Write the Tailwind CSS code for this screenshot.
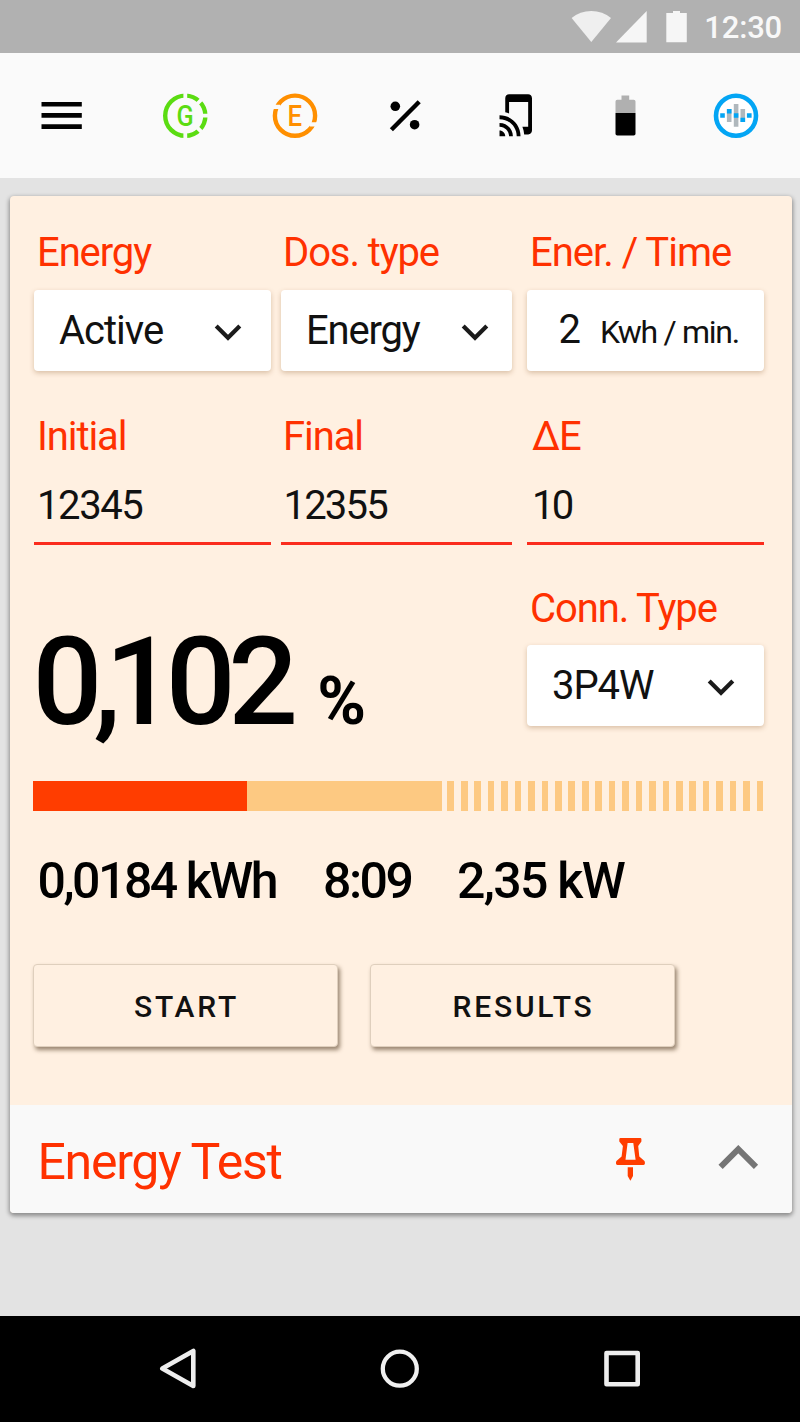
<!DOCTYPE html>
<html lang="en">
<head>
<meta charset="utf-8">
<meta name="viewport" content="width=device-width">
<title>Energy Test</title>
<script src="https://cdn.jsdelivr.net/npm/@tailwindcss/browser@4"></script>
</head>
<body class="flex h-[1422px] w-[800px] flex-col overflow-hidden bg-[#e3e3e3] font-['Roboto',sans-serif] text-[#111]">

<!-- Status bar -->
<header class="flex h-[53px] shrink-0 items-center justify-end bg-[#b1b1b1] pr-[18px] text-[#f8f8f8]">
  <svg class="h-[53px] w-[120px]" viewBox="570 0 120 53" fill="#f6f6f6">
    <path d="M591.3 42 571.6 18Q580 11 591.3 11T611 18Z" fill="#efefef"/>
    <path d="M616 42.6H646.7V11Z"/>
    <path d="M666.3 42.3V13H673V11H680V13H686.8V42.3Z"/>
  </svg>
  <span class="ml-[14px] pt-px text-[31px] leading-[53px] font-medium tracking-[-0.2px]">12:30</span>
</header>

<!-- Toolbar -->
<nav class="flex h-[125px] shrink-0 items-center bg-[#fafafa] pl-[38px]">
  <svg class="mr-[75px] size-12" viewBox="0 0 48 48"><path d="M3.5 10H43.8V14.6H3.5ZM3.5 21.1H43.8V25.7H3.5ZM3.5 32.3H43.8V36.9H3.5Z"/></svg>
  <div class="flex gap-[62.2px]">
    <svg class="size-12" viewBox="0 0 48 48" fill="none">
      <circle cx="24.3" cy="23.7" r="20.1" stroke="#5bdc12" stroke-width="4.4"/>
      <path d="M24.3 0V7M24.3 40.5V48M41 23.7H48M36 12 42 6M36 35.4 42 41.4" stroke="#fafafa" stroke-width="3.8"/>
      <text transform="translate(24 33.6) scale(.84 1)" text-anchor="middle" font-size="30" font-weight="500" fill="#5bdc12">G</text>
    </svg>
    <svg class="size-12" viewBox="0 0 48 48" fill="none">
      <circle cx="24" cy="23.7" r="20.1" stroke="#ff8f00" stroke-width="4.4"/>
      <path d="M1 14.8H9M39 32.4H47" stroke="#fafafa" stroke-width="4.2"/>
      <text transform="translate(23.8 33.6) scale(.86 1)" text-anchor="middle" font-size="30" font-weight="500" fill="#ff8f00">E</text>
    </svg>
    <svg class="size-12" viewBox="0 0 48 48">
      <circle cx="14.3" cy="14.3" r="4.8"/><circle cx="33.6" cy="32.7" r="4.8"/>
      <path d="M10.4 37.8 38.2 9.8" stroke="#000" stroke-width="4.4"/>
    </svg>
    <svg class="size-12" viewBox="0 0 48 48">
      <path transform="translate(3.7 .4) scale(1.91)" d="M2 16v2c2.76 0 5 2.24 5 5h2c0-3.87-3.13-7-7-7zm0 4v3h3c0-1.66-1.34-3-3-3zm0-8v2c4.97 0 9 4.03 9 9h2c0-6.08-4.92-11-11-11zM17 1.01L7 1c-1.1 0-2 .9-2 2v7.37c.69.16 1.36.37 2 .64V5h10v13h-3.03c.52 1.25.84 2.59.95 4H17c1.1 0 2-.9 2-2V3c0-1.1-.9-1.99-2-1.99z"/>
    </svg>
    <svg class="size-12" viewBox="0 0 48 48">
      <path fill="#b0b0b0" d="M13.5 21V9.5Q13.5 7.7 15.3 7.7H19.5V3.5H27.2V7.7H31.7Q33.5 7.7 33.5 9.5V21Z"/>
      <path d="M13.5 21H33.5V41.7Q33.5 43.5 31.7 43.5H15.3Q13.5 43.5 13.5 41.7Z"/>
    </svg>
    <svg class="size-12" viewBox="0 0 48 48">
      <circle cx="24" cy="23.7" r="20" fill="#fff" stroke="#03a5f4" stroke-width="4.6"/>
      <path fill="#b0b8bd" d="M14.9 17h4.6v13h-4.6zM21.8 12h4.6v22.7h-4.6zM28.5 17h4.6v13h-4.6z"/>
      <path fill="#03a5f4" d="M8.2 21.3h4.6v4.5H8.2zM14.9 17h4.6v4.4h-4.6zM21.8 21.3h4.6v4.5h-4.6zM28.5 25.7h4.6v4.4h-4.6zM34.9 21.3h4.7v4.5h-4.7z"/>
    </svg>
  </div>
</nav>

<!-- Energy test card -->
<main class="mt-[18px] ml-[9.5px] flex h-[1017px] w-[782.5px] shrink-0 flex-col rounded bg-[#fff0e1] shadow-[0_2px_4px_1px_rgba(0,0,0,0.38)]">
  <div class="flex h-[909px] shrink-0 flex-col pt-[37px] pl-[24px]">

    <div class="flex text-[40px] leading-[40px] tracking-[-1.1px] whitespace-nowrap">
      <div class="mr-[10px] w-[237px]">
        <div class="pl-[3.5px] text-[#ff3100]">Energy</div>
        <div class="mt-[17px] flex h-[81px] items-center rounded bg-white shadow-[0_2px_5px_rgba(130,80,30,0.3)]">
          <span class="w-[180px] pl-[25.5px] tracking-[-1px]">Active</span>
          <svg class="mt-[2px] h-[20px] w-[28px]" viewBox="0 0 28 20"><path d="M2.2 4 14 15.8 25.8 4" fill="none" stroke="#1b1b1b" stroke-width="4.2"/></svg>
        </div>
      </div>
      <div class="mr-[15px] w-[231px]">
        <div class="pl-[2.5px] text-[#ff3100]">Dos. type</div>
        <div class="mt-[17px] flex h-[81px] items-center rounded bg-white shadow-[0_2px_5px_rgba(130,80,30,0.3)]">
          <span class="w-[180px] pl-[25.5px] tracking-[-1.2px]">Energy</span>
          <svg class="mt-[2px] h-[20px] w-[28px]" viewBox="0 0 28 20"><path d="M2.2 4 14 15.8 25.8 4" fill="none" stroke="#1b1b1b" stroke-width="4.2"/></svg>
        </div>
      </div>
      <div class="w-[237px]">
        <div class="pl-[3.5px] tracking-[-1px] text-[#ff3100]">Ener. / Time</div>
        <div class="mt-[17px] flex h-[81px] items-baseline rounded bg-white pt-[20px] shadow-[0_2px_5px_rgba(130,80,30,0.3)]">
          <span class="w-[73.5px] pl-[32px]">2</span>
          <span class="text-[32px] tracking-[-1.3px]">Kwh / min.</span>
        </div>
      </div>
    </div>

    <div class="mt-[46px] flex text-[40px] leading-[40px] tracking-[-1.1px] whitespace-nowrap">
      <div class="mr-[10px] w-[237px] border-b-[3px] border-[#fb2c1d] pb-[16px]">
        <div class="pl-[3.5px] text-[#ff3100]">Initial</div>
        <div class="mt-[29px] pl-[3.5px] tracking-[-1.4px]">12345</div>
      </div>
      <div class="mr-[15px] w-[231px] border-b-[3px] border-[#fb2c1d] pb-[16px]">
        <div class="pl-[2.5px] text-[#ff3100]">Final</div>
        <div class="mt-[29px] pl-[3px] tracking-[-1.8px]">12355</div>
      </div>
      <div class="w-[237px] border-b-[3px] border-[#fb2c1d] pb-[16px]">
        <div class="pl-[5.5px] text-[#ff3100]">ΔE</div>
        <div class="mt-[29px] pl-[5.5px] tracking-[-2.8px]">10</div>
      </div>
    </div>

    <div class="mt-[44px] flex h-[137px] whitespace-nowrap">
      <div class="flex w-[493px] items-baseline pt-[32px] font-medium text-black">
        <span class="-ml-[1px] text-[123px] leading-[123px] tracking-[-9px]">0<span class="tracking-[-16px]">,</span>1<span class="tracking-[-7.5px]">0</span>2</span>
        <span class="ml-[28px] text-[66px] leading-[66px] font-bold">%</span>
      </div>
      <div class="w-[237px] text-[40px] leading-[40px] tracking-[-1.1px]">
        <div class="pl-[3.5px] text-[#ff3100]">Conn. Type</div>
        <div class="mt-[16px] flex h-[81px] items-center rounded bg-white shadow-[0_2px_5px_rgba(130,80,30,0.3)]">
          <span class="w-[180px] pl-[25.5px]">3P4W</span>
          <svg class="mt-[2px] h-[20px] w-[28px]" viewBox="0 0 28 20"><path d="M2.2 4 14 15.8 25.8 4" fill="none" stroke="#1b1b1b" stroke-width="4.2"/></svg>
        </div>
      </div>
    </div>

    <div class="mt-[55px] -ml-[0.3px] flex h-[30px] w-[730.8px]">
      <div class="w-[213.8px] bg-[#ff3d00]"></div>
      <div class="w-[195.3px] bg-[#fdc982]"></div>
      <div class="flex-1 bg-[repeating-linear-gradient(to_right,transparent_0px,transparent_5.5px,#fdc982_5.5px,#fdc982_12.1px,transparent_12.1px,transparent_13.44px)]"></div>
    </div>

    <div class="mt-[45px] flex text-[50px] leading-[50px] font-medium tracking-[-2.5px] whitespace-nowrap text-black">
      <span class="w-[287px] pl-[4px]">0,0184 kWh</span>
      <span class="w-[135px] pl-[2.5px]">8:09</span>
      <span class="pl-[1.5px] tracking-[-1.7px]">2,35 kW</span>
    </div>

    <div class="mt-[58px] -ml-[0.5px] flex gap-[32px] text-[30px] leading-[30px] font-medium tracking-[2.8px]">
      <button class="h-[83px] w-[305px] rounded border border-[#dfcfbd] bg-[#fff0e1] pt-[3px] pl-[2px] shadow-[2px_3px_4px_rgba(70,45,20,0.55)]">START</button>
      <button class="h-[83px] w-[305px] rounded border border-[#dfcfbd] bg-[#fff0e1] pt-[3px] pl-[2px] shadow-[2px_3px_4px_rgba(70,45,20,0.55)]">RESULTS</button>
    </div>
  </div>

  <div class="flex h-[108px] shrink-0 items-center rounded-b bg-[#f9f9f9] pl-[28px]">
    <h1 class="w-[576.5px] pt-[5px] text-[50px] leading-[50px] tracking-[-1.3px] text-[#ff3100]">Energy Test</h1>
    <svg class="h-[46px] w-[34px]" viewBox="0 0 34 46" fill="#ff3d00">
      <path fill-rule="evenodd" d="M6.5 2H26.2Q27.4 2 27.4 3.2V5.5L24.2 10 25.3 20.5 30.2 24.8Q30.9 25.5 30.9 26.6V27.6Q30.9 29 29.5 29H3.4Q2 29 2 27.6V26.6Q2 25.5 2.7 24.8L7.6 20.5 8.9 10 5.3 5.5V3.2Q5.3 2 6.5 2ZM13.6 7 11.5 23.7H21.6L19.3 7Z"/>
      <path d="M13.7 31.3H19V40L16.4 44.8 13.7 40Z"/>
    </svg>
    <svg class="ml-[70px] h-[28px] w-[42px]" viewBox="0 0 42 28"><path d="M2.6 21.8 20.3 4.2 38 21.8" fill="none" stroke="#757575" stroke-width="6"/></svg>
  </div>
</main>

<!-- System navigation -->
<footer class="mt-auto flex h-[106px] shrink-0 items-center bg-black pl-[158px]">
  <svg class="size-[42px]" viewBox="0 0 42 42"><path d="M4.3 20.6 35.3 3V38Z" fill="none" stroke="#eee" stroke-width="4.6" stroke-linejoin="round"/></svg>
  <svg class="ml-[179px] size-[42px]" viewBox="0 0 42 42"><circle cx="20.8" cy="20.7" r="17" fill="none" stroke="#f0f0f0" stroke-width="4.3"/></svg>
  <svg class="ml-[180px] size-[42px]" viewBox="0 0 42 42"><rect x="5.5" y="5" width="31.2" height="31.2" fill="none" stroke="#eee" stroke-width="4.6" stroke-linejoin="round"/></svg>
</footer>
</body>
</html>
